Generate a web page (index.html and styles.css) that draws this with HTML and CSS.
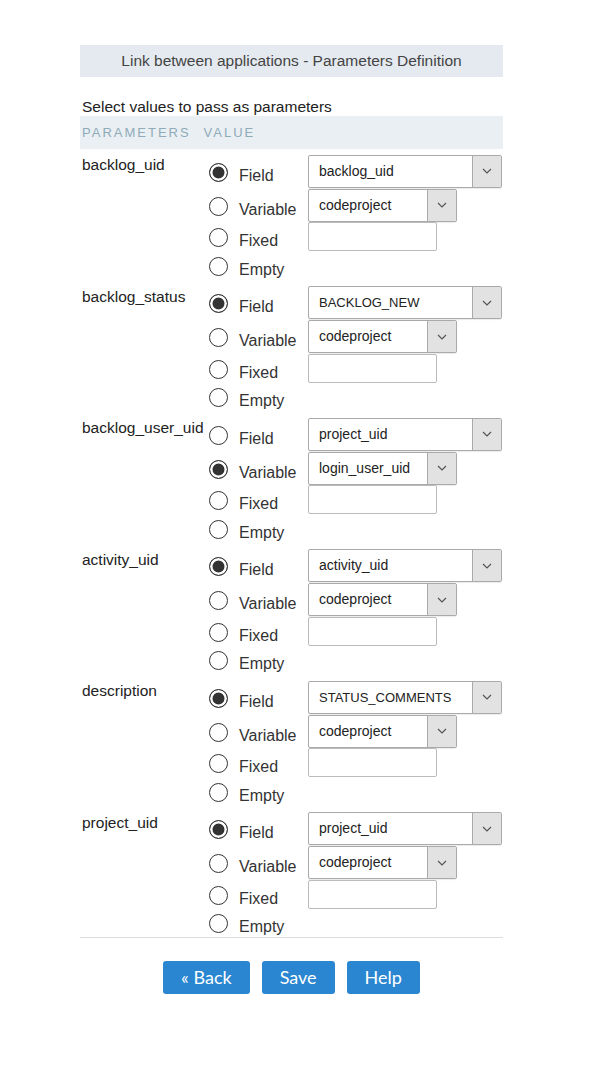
FILE: index.html
```html
<!DOCTYPE html>
<html>
<head>
  <title>Link between applications - Parameters Definition</title>
  <link rel="stylesheet" href="styles.css">
</head>
<body>
  <div class="wrap">
    <div class="title-bar">Link between applications - Parameters Definition</div>

    <p class="intro">Select values to pass as parameters</p>
    <div class="head-row">
      <span class="head-param">PARAMETERS</span>
      <span>VALUE</span>
    </div>

    <div class="groups">
      <div class="group">
        <div class="param">backlog_uid</div>
        <div class="opts">
          <div class="opt tall">
            <label><input type="radio" name="p1" checked><span>Field</span></label>
            <div class="combo wide"><span class="combo-text">backlog_uid</span><span class="combo-arrow"><svg width="10" height="6" viewBox="0 0 10 6"><path d="M1 1l4 4 4-4" fill="none" stroke="#555" stroke-width="1.2"/></svg></span></div>
          </div>
          <div class="opt tall">
            <label><input type="radio" name="p1"><span>Variable</span></label>
            <div class="combo narrow"><span class="combo-text">codeproject</span><span class="combo-arrow"><svg width="10" height="6" viewBox="0 0 10 6"><path d="M1 1l4 4 4-4" fill="none" stroke="#555" stroke-width="1.2"/></svg></span></div>
          </div>
          <div class="opt mid">
            <label><input type="radio" name="p1"><span>Fixed</span></label>
            <input type="text" class="fixed-input">
          </div>
          <div class="opt short">
            <label><input type="radio" name="p1"><span>Empty</span></label>
          </div>
        </div>
      </div>

      <div class="group">
        <div class="param">backlog_status</div>
        <div class="opts">
          <div class="opt tall">
            <label><input type="radio" name="p2" checked><span>Field</span></label>
            <div class="combo wide"><span class="combo-text caps">BACKLOG_NEW</span><span class="combo-arrow"><svg width="10" height="6" viewBox="0 0 10 6"><path d="M1 1l4 4 4-4" fill="none" stroke="#555" stroke-width="1.2"/></svg></span></div>
          </div>
          <div class="opt tall">
            <label><input type="radio" name="p2"><span>Variable</span></label>
            <div class="combo narrow"><span class="combo-text">codeproject</span><span class="combo-arrow"><svg width="10" height="6" viewBox="0 0 10 6"><path d="M1 1l4 4 4-4" fill="none" stroke="#555" stroke-width="1.2"/></svg></span></div>
          </div>
          <div class="opt mid">
            <label><input type="radio" name="p2"><span>Fixed</span></label>
            <input type="text" class="fixed-input">
          </div>
          <div class="opt short">
            <label><input type="radio" name="p2"><span>Empty</span></label>
          </div>
        </div>
      </div>

      <div class="group">
        <div class="param">backlog_user_uid</div>
        <div class="opts">
          <div class="opt tall">
            <label><input type="radio" name="p3"><span>Field</span></label>
            <div class="combo wide"><span class="combo-text">project_uid</span><span class="combo-arrow"><svg width="10" height="6" viewBox="0 0 10 6"><path d="M1 1l4 4 4-4" fill="none" stroke="#555" stroke-width="1.2"/></svg></span></div>
          </div>
          <div class="opt tall">
            <label><input type="radio" name="p3" checked><span>Variable</span></label>
            <div class="combo narrow"><span class="combo-text">login_user_uid</span><span class="combo-arrow"><svg width="10" height="6" viewBox="0 0 10 6"><path d="M1 1l4 4 4-4" fill="none" stroke="#555" stroke-width="1.2"/></svg></span></div>
          </div>
          <div class="opt mid">
            <label><input type="radio" name="p3"><span>Fixed</span></label>
            <input type="text" class="fixed-input">
          </div>
          <div class="opt short">
            <label><input type="radio" name="p3"><span>Empty</span></label>
          </div>
        </div>
      </div>

      <div class="group">
        <div class="param">activity_uid</div>
        <div class="opts">
          <div class="opt tall">
            <label><input type="radio" name="p4" checked><span>Field</span></label>
            <div class="combo wide"><span class="combo-text">activity_uid</span><span class="combo-arrow"><svg width="10" height="6" viewBox="0 0 10 6"><path d="M1 1l4 4 4-4" fill="none" stroke="#555" stroke-width="1.2"/></svg></span></div>
          </div>
          <div class="opt tall">
            <label><input type="radio" name="p4"><span>Variable</span></label>
            <div class="combo narrow"><span class="combo-text">codeproject</span><span class="combo-arrow"><svg width="10" height="6" viewBox="0 0 10 6"><path d="M1 1l4 4 4-4" fill="none" stroke="#555" stroke-width="1.2"/></svg></span></div>
          </div>
          <div class="opt mid">
            <label><input type="radio" name="p4"><span>Fixed</span></label>
            <input type="text" class="fixed-input">
          </div>
          <div class="opt short">
            <label><input type="radio" name="p4"><span>Empty</span></label>
          </div>
        </div>
      </div>

      <div class="group">
        <div class="param">description</div>
        <div class="opts">
          <div class="opt tall">
            <label><input type="radio" name="p5" checked><span>Field</span></label>
            <div class="combo wide"><span class="combo-text caps">STATUS_COMMENTS</span><span class="combo-arrow"><svg width="10" height="6" viewBox="0 0 10 6"><path d="M1 1l4 4 4-4" fill="none" stroke="#555" stroke-width="1.2"/></svg></span></div>
          </div>
          <div class="opt tall">
            <label><input type="radio" name="p5"><span>Variable</span></label>
            <div class="combo narrow"><span class="combo-text">codeproject</span><span class="combo-arrow"><svg width="10" height="6" viewBox="0 0 10 6"><path d="M1 1l4 4 4-4" fill="none" stroke="#555" stroke-width="1.2"/></svg></span></div>
          </div>
          <div class="opt mid">
            <label><input type="radio" name="p5"><span>Fixed</span></label>
            <input type="text" class="fixed-input">
          </div>
          <div class="opt short">
            <label><input type="radio" name="p5"><span>Empty</span></label>
          </div>
        </div>
      </div>

      <div class="group">
        <div class="param">project_uid</div>
        <div class="opts">
          <div class="opt tall">
            <label><input type="radio" name="p6" checked><span>Field</span></label>
            <div class="combo wide"><span class="combo-text">project_uid</span><span class="combo-arrow"><svg width="10" height="6" viewBox="0 0 10 6"><path d="M1 1l4 4 4-4" fill="none" stroke="#555" stroke-width="1.2"/></svg></span></div>
          </div>
          <div class="opt tall">
            <label><input type="radio" name="p6"><span>Variable</span></label>
            <div class="combo narrow"><span class="combo-text">codeproject</span><span class="combo-arrow"><svg width="10" height="6" viewBox="0 0 10 6"><path d="M1 1l4 4 4-4" fill="none" stroke="#555" stroke-width="1.2"/></svg></span></div>
          </div>
          <div class="opt mid">
            <label><input type="radio" name="p6"><span>Fixed</span></label>
            <input type="text" class="fixed-input">
          </div>
          <div class="opt short">
            <label><input type="radio" name="p6"><span>Empty</span></label>
          </div>
        </div>
      </div>
    </div>

    <div class="actions">
      <button class="btn">&laquo; Back</button>
      <button class="btn">Save</button>
      <button class="btn">Help</button>
    </div>
  </div>
</body>
</html>
```

FILE: styles.css
```css
body {
  margin: 0;
  background-color: #fff;
  font-family: 'Liberation Sans', Arial, sans-serif;
  color: #222;
}

.wrap {
  width: 423px;
  margin: 45px 0 0 80px;
}

.title-bar {
  height: 32px;
  line-height: 32px;
  background-color: #e5eaf0;
  text-align: center;
  font-size: 15.5px;
  color: #444;
}

.intro {
  margin: 21px 0 0 2px;
  font-size: 15.5px;
  line-height: 18px;
}

.head-row {
  display: flex;
  align-items: center;
  height: 33px;
  padding-left: 2px;
  background-color: #eaeff3;
  font-size: 13px;
  letter-spacing: 2px;
  color: #8fabb9;
}

.head-param {
  margin-right: 13px;
}

.groups {
  display: flex;
  flex-direction: column;
  gap: 6.5px;
  margin-top: 5px;
}

.group {
  display: grid;
  grid-template-columns: 129px 1fr;
}

.param {
  padding: 2px 0 0 2px;
  font-size: 15.5px;
  line-height: 18px;
  white-space: nowrap;
}

.opt {
  display: grid;
  grid-template-columns: 99px auto;
  justify-items: start;
  align-items: center;
}

.opt.tall { height: 34px; }
.opt.mid { height: 29px; }
.opt.short { height: 28px; }

.opt label {
  display: flex;
  align-items: center;
  height: 100%;
  font-size: 16px;
  color: #333;
}

.opt label span {
  padding-top: 9px;
  line-height: 18px;
}

input[type="radio"] {
  appearance: none;
  -webkit-appearance: none;
  width: 19px;
  height: 19px;
  margin: 2px 11px 0 0;
  border: 1.8px solid #333;
  border-radius: 50%;
  background-color: #fff;
}

input[type="radio"]:checked {
  background-color: #333;
  box-shadow: inset 0 0 0 2.5px #fff;
}

.combo {
  display: flex;
  height: 33px;
  box-sizing: border-box;
  border: 1px solid #aaa;
  border-radius: 2px;
  background-color: #fff;
  box-shadow: 0 1px 1px rgba(0,0,0,0.08);
  font-size: 14px;
  color: #222;
}

.combo.wide { width: 194px; }
.combo.narrow { width: 149px; }

.combo-text {
  flex: 1;
  padding-left: 10px;
  line-height: 31px;
  white-space: nowrap;
  overflow: hidden;
}

.combo-text.caps {
  font-size: 13px;
}

.combo-arrow {
  display: flex;
  align-items: center;
  justify-content: center;
  width: 28px;
  background-color: #e2e2e2;
  border-left: 1px solid #aaa;
}

.fixed-input {
  width: 129px;
  height: 29px;
  box-sizing: border-box;
  margin: 0;
  border: 1px solid #bbb;
  border-radius: 2px;
  font-size: 14px;
}

.actions {
  display: flex;
  justify-content: center;
  gap: 12px;
  padding-top: 23px;
  border-top: 1px solid #ddd;
}

.btn {
  height: 33px;
  padding: 0 18px;
  border: none;
  border-radius: 3px;
  background-color: #2a86d1;
  color: #fff;
  font-family: Lato, 'Open Sans', sans-serif;
  font-size: 18px;
}
```
